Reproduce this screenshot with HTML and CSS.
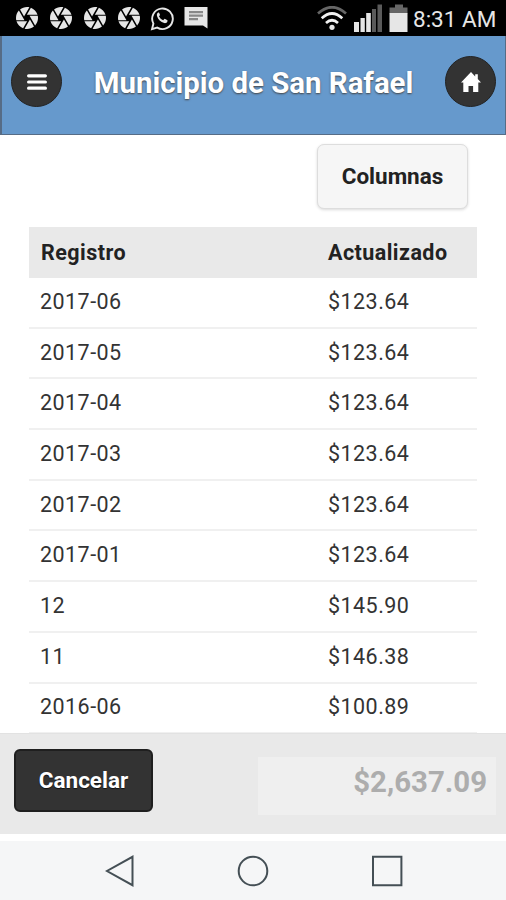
FILE: index.html
```html
<!DOCTYPE html>
<html lang="es">
<head>
    <meta charset="UTF-8">
    <title>Municipio de San Rafael</title>
    <link rel="stylesheet" href="styles.css">
</head>
<body>
    <svg width="0" height="0" class="sprite">
        <symbol id="shutter" viewBox="2 2 20 20">
            <path d="M9.4 10.5l4.77-8.26C13.47 2.09 12.75 2 12 2c-2.4 0-4.6.85-6.32 2.25l3.66 6.35.06-.1zM21.54 9c-.92-2.92-3.15-5.26-6-6.34L11.88 9h9.66zm.26 1h-7.49l.29.5 4.76 8.25C21 16.97 22 14.61 22 12c0-.69-.07-1.35-.2-2zM8.54 12l-3.9-6.75C3.01 7.03 2 9.39 2 12c0 .69.07 1.35.2 2h7.49l-1.15-2zm-6.08 3c.92 2.92 3.15 5.26 6 6.34L12.12 15H2.46zm11.27 0l-3.9 6.76c.7.15 1.42.24 2.17.24 2.4 0 4.6-.85 6.32-2.25l-3.66-6.35-.93 1.6z"/>
        </symbol>
    </svg>

    <div class="status-bar">
        <div class="notifications">
            <svg class="shutter"><use href="#shutter"/></svg>
            <svg class="shutter"><use href="#shutter"/></svg>
            <svg class="shutter"><use href="#shutter"/></svg>
            <svg class="shutter"><use href="#shutter"/></svg>
            <svg class="whatsapp" width="24" height="25" viewBox="0 0 24 25">
                <path d="M2 23.2 3.4 17.6A10.3 10.3 0 1 1 7.2 21.6Z" fill="none" stroke="#e6e6e6" stroke-width="1.9"/>
                <path d="M8.3 6.6c-1.3.6-1.7 2-1.3 3.4 1 3.6 3.7 6.1 7.2 7.1 1.4.3 2.9-.4 3.2-1.6l.1-1.2-2.9-1.5-1.4 1.5c-2-.8-3.3-2.1-4.2-4l1.1-1.3-1.1-2.4z"/>
            </svg>
            <svg class="message" width="24" height="22" viewBox="0 0 24 22">
                <path d="M.5 0h23v21.5L19 18.5H.5z"/>
                <path d="M5 5.2h14M5 8.7h14M5 12.2h9" stroke="#888" stroke-width="2.2"/>
            </svg>
        </div>
        <div class="system">
            <svg class="wifi" width="30" height="25" viewBox="0 0 30 25">
                <g fill="none" stroke-width="2.7">
                    <path d="M1 7.5Q15-5 29 7.5" stroke="#666"/>
                    <path d="M4.7 12.2Q15 2.8 25.3 12.2M9 17Q15 11.5 21 17" stroke="#f2f2f2"/>
                </g>
                <circle cx="15" cy="21.3" r="2.6"/>
            </svg>
            <svg class="signal" width="28" height="29" viewBox="0 0 28 29">
                <path d="M0 18h5v10H0zM6.5 14h4.3v14H6.5zM12.2 9h4.6v19h-4.6z"/>
                <path d="M18 5h4v23h-4zM23.5 0.5h4.5V28h-4.5z" fill="#5a5a5a"/>
            </svg>
            <svg class="battery" width="19" height="29" viewBox="0 0 19 29">
                <path d="M6 .5h8v3h4.5v6H.5v-6H6z" fill="#666"/>
                <path d="M.5 9h18v19H.5z"/>
            </svg>
            <span class="time">8:31 AM</span>
        </div>
    </div>

    <header class="header">
        <button class="round-btn" aria-label="Menú">
            <svg width="20" height="16" viewBox="0 0 20 16">
                <path d="M1.6 1.8h16.8M1.6 8h16.8M1.6 14.2h16.8" stroke="#fff" stroke-width="3.2" stroke-linecap="round"/>
            </svg>
        </button>
        <h1>Municipio de San Rafael</h1>
        <button class="round-btn" aria-label="Inicio">
            <svg width="20" height="20" viewBox="0 0 20 20">
                <path d="M10 0 0 10.5h2.3V20h5.2v-6h4.6v6h5.2v-9.5H20L16.8 7V2.2h-2.6v2.2z" fill="#fff"/>
            </svg>
        </button>
    </header>

    <main class="content">
        <button class="columns-btn">Columnas</button>
        <table class="records">
            <thead>
                <tr><th>Registro</th><th>Actualizado</th></tr>
            </thead>
            <tbody>
                <tr><td>2017-06</td><td>$123.64</td></tr>
                <tr><td>2017-05</td><td>$123.64</td></tr>
                <tr><td>2017-04</td><td>$123.64</td></tr>
                <tr><td>2017-03</td><td>$123.64</td></tr>
                <tr><td>2017-02</td><td>$123.64</td></tr>
                <tr><td>2017-01</td><td>$123.64</td></tr>
                <tr><td>12</td><td>$145.90</td></tr>
                <tr><td>11</td><td>$146.38</td></tr>
                <tr><td>2016-06</td><td>$100.89</td></tr>
            </tbody>
        </table>
    </main>

    <footer class="footer">
        <button class="cancel-btn">Cancelar</button>
        <div class="total">$2,637.09</div>
    </footer>

    <nav class="nav-bar">
        <svg width="30" height="32" viewBox="0 0 30 32"><path d="M27.5 1.8v28.4L2 16z"/></svg>
        <svg width="32" height="32" viewBox="0 0 32 32"><circle cx="16" cy="16" r="14.3"/></svg>
        <svg width="32" height="32" viewBox="0 0 32 32"><path d="M2 1.8h28.4v28.4H2z"/></svg>
    </nav>
</body>
</html>
```

FILE: styles.css
```css
* { box-sizing: border-box; }
body { margin: 0; width: 506px; height: 900px; overflow: hidden; display: flex; flex-direction: column; font-family: Roboto, "Liberation Sans", sans-serif; background-color: #fff; color: #222; }
button { font-family: inherit; padding: 0; cursor: pointer; }
.sprite { display: none; }

/* barra de estado */
.status-bar { height: 36px; flex: none; display: flex; justify-content: space-between; background-color: #000; fill: #e6e6e6; }
.notifications { display: flex; align-items: center; padding-left: 16px; }
.shutter { width: 22px; height: 22px; margin-right: 12px; }
.whatsapp { margin-left: -2px; }
.message { margin-left: 10px; }
.system { display: flex; align-items: center; padding-right: 9px; }
.signal { margin-left: 7px; }
.battery { margin: 0 5px 0 7px; }
.time { width: 84px; padding-top: 1px; font-size: 22.5px; color: #e6e6e6; white-space: nowrap; }

.header { height: 99px; flex: none; display: flex; justify-content: space-between; align-items: flex-start; padding: 20px 9px 0 9px; background-color: #6699cc; border: solid #566c86; border-width: 0 1px 1px 2px; }
.header h1 { margin: 9px 0 0; font-size: 29.4px; line-height: 36px; color: #fff; text-shadow: 0 1px 2px #444; white-space: nowrap; }
.round-btn { width: 51px; height: 51px; display: flex; align-items: center; justify-content: center; border: 1px solid #222; border-radius: 50%; background-color: #333; }

.content { height: 598px; flex: none; padding: 9px 29px 0; overflow: hidden; display: flex; flex-direction: column; }
.columns-btn { align-self: flex-end; width: 151px; height: 65px; flex: none; padding-bottom: 2px; margin: 0 9px 18px 0; border: 1px solid #ddd; border-radius: 7px; background-color: #f6f6f6; box-shadow: 0 1px 3px rgba(0,0,0,0.15); color: #222; font-size: 22.5px; font-weight: bold; }
.records { width: 448px; border-collapse: separate; border-spacing: 0; table-layout: fixed; font-size: 21.5px; letter-spacing: 0.45px; }
.records th { height: 51px; padding: 0 11px 0 12px; background-color: #e9e9e9; text-align: left; }
.records td { height: 50.7px; padding: 0 11px 2px; border-bottom: 2px solid #f0f0f0; color: #333; }
.records th:first-child { width: 288px; }
.records th:last-child, .records td:last-child { padding-left: 11px; }

.footer { height: 101px; flex: none; display: flex; justify-content: space-between; align-items: flex-start; padding: 15px 10px 0 14px; background-color: #e9e9e9; border-top: 1px solid #e2e2e2; }
.cancel-btn { width: 139px; height: 63px; padding-bottom: 2px; border: 2px solid #1f1f1f; border-radius: 6px; background-color: #333; color: #fff; font-size: 22.5px; font-weight: bold; text-shadow: 0 1px 1px #111; }
.total { width: 238px; height: 58px; margin-top: 8px; padding-right: 9px; background-color: #efefef; color: #adadad; font-size: 29.4px; line-height: 50px; font-weight: bold; text-align: right; }

.nav-bar { height: 66px; flex: none; display: flex; justify-content: center; align-items: center; gap: 102px; padding: 1px 0 0 2px; border-top: 7px solid #fff; background-color: #f5f6f7; fill: none; stroke: #444f55; stroke-width: 2px; }
```
